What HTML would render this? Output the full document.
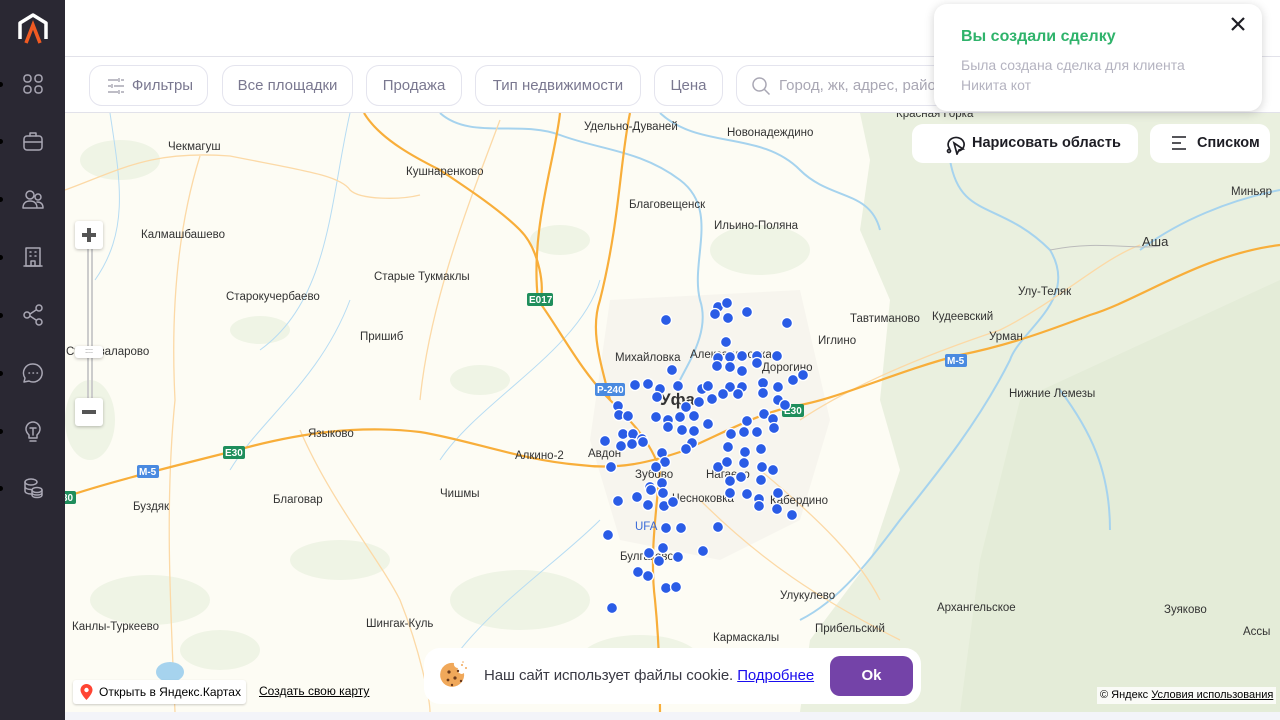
<!DOCTYPE html>
<html><head><meta charset="utf-8"><style>
*{margin:0;padding:0;box-sizing:border-box}
body{width:1280px;height:720px;overflow:hidden;background:#f3f4f9;font-family:"Liberation Sans",sans-serif;position:relative}
.side{position:absolute;left:0;top:0;width:65px;height:720px;background:#2a2833}
.side .dot{position:absolute;left:-2px;width:5px;height:5px;border-radius:50%;background:#000}
.side svg.ic{position:absolute;left:22px;width:22px;height:22px;fill:none;stroke:#a9a7b4;stroke-width:1.5;stroke-linecap:round;stroke-linejoin:round}
.head{position:absolute;left:65px;top:0;right:0;height:57px;background:#fff;border-bottom:1px solid #e2e2ea}
.bar{position:absolute;left:65px;top:57px;right:0;height:56px;background:#fff;border-bottom:1px solid #e2e2ea}
.chip{position:absolute;top:8px;height:41px;border:1px solid #e4e4ee;border-radius:13px;color:#7a7890;font-size:15px;line-height:39px;text-align:center}
.map{position:absolute;left:65px;top:113px;width:1215px;height:599px;overflow:hidden;background:#fdfcf4}
.toast{position:absolute;left:934px;top:4px;width:328px;height:107px;background:#fff;border-radius:13px;box-shadow:0 2px 10px rgba(0,0,0,.18)}
.btn{position:absolute;top:124px;height:39px;background:#fff;border-radius:11px;font-size:14.5px;font-weight:bold;color:#1d1d24;line-height:39px}
.zb{position:absolute;left:75px;width:28px;height:28px;background:#fff;border-radius:3px;box-shadow:0 1px 3px rgba(0,0,0,.25)}
</style></head><body>
<div class="side">
<svg style="position:absolute;left:17px;top:12px" width="32" height="32" viewBox="0 0 32 32"><path d="M3 27V11L16 3l13 8v16" fill="none" stroke="#fff" stroke-width="3.5" stroke-linejoin="round"/><path d="M9 31L16 13l7 18" fill="none" stroke="#f05a22" stroke-width="3.5"/></svg>
<div class="dot" style="top:82px"></div><div class="dot" style="top:139px"></div><div class="dot" style="top:197px"></div><div class="dot" style="top:255px"></div><div class="dot" style="top:313px"></div><div class="dot" style="top:371px"></div><div class="dot" style="top:429px"></div><div class="dot" style="top:486px"></div>
<svg class="ic" style="top:73px" viewBox="0 0 22 22"><rect x="2" y="2" width="7" height="7" rx="3"/><rect x="13" y="2" width="7" height="7" rx="3"/><rect x="2" y="13" width="7" height="7" rx="3"/><rect x="13" y="13" width="7" height="7" rx="3"/></svg>
<svg class="ic" style="top:130px" viewBox="0 0 22 22"><rect x="2" y="6" width="18" height="14" rx="3"/><path d="M8 6V3h6v3M2 12h18"/></svg>
<svg class="ic" style="top:188px" viewBox="0 0 22 22"><circle cx="8" cy="7" r="4"/><circle cx="16" cy="9" r="3"/><path d="M1 20c0-5 3-7 7-7s7 2 7 7zM15 14c4 0 6 2 6 6h-6"/></svg>
<svg class="ic" style="top:246px" viewBox="0 0 22 22"><rect x="4" y="2" width="14" height="18"/><path d="M2 20h18M8 6h1M13 6h1M8 10h1M13 10h1M9 20v-5h4v5"/></svg>
<svg class="ic" style="top:304px" viewBox="0 0 22 22"><circle cx="17" cy="4" r="3"/><circle cx="5" cy="11" r="3"/><circle cx="17" cy="18" r="3"/><path d="M8 10l6-4M8 12l6 4"/></svg>
<svg class="ic" style="top:362px" viewBox="0 0 22 22"><path d="M11 2a9 9 0 1 1-4 17l-5 1 1-4A9 9 0 0 1 11 2z"/><path d="M7 11h.5M11 11h.5M15 11h.5"/></svg>
<svg class="ic" style="top:420px" viewBox="0 0 22 22"><path d="M7 15c-2-2-3-4-3-6a7 7 0 0 1 14 0c0 2-1 4-3 6v3H7zM8 21h6M8 8h6M11 8v7"/></svg>
<svg class="ic" style="top:477px" viewBox="0 0 22 22"><ellipse cx="9" cy="5" rx="6" ry="3"/><path d="M3 5v9c0 2 3 3 6 3M3 9.5c0 2 3 3 6 3"/><ellipse cx="15" cy="13" rx="5" ry="2.5"/><path d="M10 13v5c0 1.5 2 2.5 5 2.5s5-1 5-2.5v-5M10 15.5c0 1.5 2 2.5 5 2.5s5-1 5-2.5"/></svg>
</div>
<div class="head">
<svg style="position:absolute;left:1064px;top:17px" width="22" height="22" viewBox="0 0 22 22" fill="none" stroke="#eee" stroke-width="1.5"><circle cx="11" cy="11" r="9"/><path d="M11 7v8M7 11h8"/></svg>
<svg style="position:absolute;left:1113px;top:16px" width="22" height="22" viewBox="0 0 22 22" fill="none" stroke="#eee" stroke-width="1.5"><path d="M5 16V10a6 6 0 0 1 12 0v6l2 2H3zM9 20h4"/></svg>
</div>
<div class="bar">
<div class="chip" style="left:24px;width:119px;padding-left:28px"><svg style="position:absolute;left:17px;top:11px" width="18" height="18" viewBox="0 0 18 18" fill="none" stroke="#a9a7b4" stroke-width="1.4"><path d="M1 3h10M14 3h3M12 1v4M1 9h3M7 9h10M5 7v4M1 15h10M14 15h3M12 13v4"/></svg>Фильтры</div>
<div class="chip" style="left:157px;width:131px">Все площадки</div>
<div class="chip" style="left:301px;width:96px">Продажа</div>
<div class="chip" style="left:410px;width:166px">Тип недвижимости</div>
<div class="chip" style="left:589px;width:69px">Цена</div>
<div class="chip" style="left:671px;width:520px;text-align:left;padding-left:42px;color:#a9a7b4">
<svg style="position:absolute;left:14px;top:10px" width="20" height="20" viewBox="0 0 20 20" fill="none" stroke="#a9a7b4" stroke-width="1.5"><circle cx="8.5" cy="8.5" r="6.5"/><path d="M13.5 13.5l5 5"/></svg>Город, жк, адрес, район</div>
</div>
<div class="map">
<svg width="1215" height="599" viewBox="65 113 1215 599" style="position:absolute;left:0;top:0" font-family="Liberation Sans, sans-serif" font-size="11.5" fill="#333">
<path d="M860 113 L1280 113 L1280 712 L800 712 L810 640 L870 560 L900 470 L880 400 L890 300 L860 230 L870 160Z" fill="#eaf0df"/>
<path d="M1020 400 L1280 280 L1280 712 L960 712 L980 560Z" fill="#e4ecd8"/>
<path d="M610 300 L800 290 L830 420 L800 520 L720 560 L620 540 L590 440Z" fill="#f7f5ee"/>
<g fill="#eff4e5">
<ellipse cx="120" cy="160" rx="40" ry="20"/><ellipse cx="260" cy="330" rx="30" ry="14"/><ellipse cx="340" cy="560" rx="50" ry="20"/><ellipse cx="150" cy="600" rx="60" ry="25"/><ellipse cx="520" cy="600" rx="70" ry="30"/><ellipse cx="760" cy="250" rx="50" ry="25"/><ellipse cx="640" cy="660" rx="60" ry="25"/><ellipse cx="480" cy="380" rx="30" ry="15"/><ellipse cx="90" cy="420" rx="25" ry="40"/><ellipse cx="220" cy="650" rx="40" ry="20"/><ellipse cx="560" cy="240" rx="30" ry="15"/>
</g>
<g fill="none" stroke="#a6d3ee" stroke-width="2">
<path d="M440 113 C470 140 520 120 560 135 C600 150 640 150 680 180 C720 210 690 260 700 300 C710 330 690 360 680 380"/>
<path d="M660 113 C700 150 760 130 800 170 C830 200 870 190 880 230"/>
<path d="M950 160 C960 220 1000 200 1050 250 C1080 300 1020 330 1010 360 C980 420 940 470 900 520 C870 560 840 600 800 620"/>
<path d="M1060 390 C1090 430 1110 470 1110 530"/>
<path d="M1140 250 C1180 220 1230 200 1280 190"/>
</g>
<g fill="none" stroke="#b6dcf3" stroke-width="1">
<path d="M110 113 C120 180 130 230 95 280"/><path d="M350 113 C330 200 330 300 260 350"/><path d="M350 300 C320 380 260 420 230 470"/><path d="M600 280 C580 350 480 400 440 460"/><path d="M600 520 C560 560 500 600 460 650"/>
</g>
<g fill="none" stroke="#fcd9a6" stroke-width="1.3">
<path d="M65 190 C120 170 150 150 230 156 C300 170 340 175 350 190 C360 200 400 200 420 195"/>
<path d="M200 156 C180 220 170 300 175 400 C165 500 170 600 175 712"/>
<path d="M500 120 C470 200 430 300 420 400"/><path d="M300 430 C330 500 380 560 400 600 C420 650 430 700 430 712"/>
<path d="M700 500 C760 560 820 600 900 640"/><path d="M760 470 C820 520 860 560 880 600"/>
<path d="M800 420 C860 380 940 350 1000 330 C1060 300 1100 260 1140 245"/>
</g>
<g fill="none" stroke="#f8ae3a" stroke-width="2.2">
<path d="M65 497 C100 485 150 472 230 452 C300 432 360 425 420 432 C470 440 520 460 580 465 C620 470 650 462 680 452 C730 430 760 412 800 405 C840 398 900 370 960 355 C1010 345 1050 330 1090 315 C1140 300 1200 255 1280 245"/>
<path d="M560 113 C555 160 530 230 538 300 C560 330 580 370 610 400 C630 420 650 440 660 470"/>
<path d="M364 113 C380 140 420 160 440 170 C470 190 500 210 520 230 C540 250 545 290 540 300"/>
<path d="M660 470 C655 520 650 560 655 600 C660 650 660 700 660 712"/>
<path d="M610 400 C600 360 590 330 600 300 C620 220 620 160 630 113"/>
</g>
<path d="M1050 250 C1100 240 1130 250 1160 246" stroke="#bbb" stroke-width="1" fill="none"/>
<ellipse cx="170" cy="672" rx="14" ry="10" fill="#a6d3ee"/>
<g font-size="10" font-weight="bold" fill="#fff">
<rect x="527" y="293" width="26" height="13" rx="2" fill="#1f8e5c"/><text x="529" y="303">E017</text>
<rect x="595" y="383" width="30" height="13" rx="2" fill="#4a8ae0"/><text x="597" y="393">P-240</text>
<rect x="782" y="404" width="22" height="13" rx="2" fill="#1f8e5c"/><text x="784" y="414">E30</text>
<rect x="945" y="354" width="22" height="13" rx="2" fill="#4a8ae0"/><text x="947" y="364">M-5</text>
<rect x="137" y="465" width="22" height="13" rx="2" fill="#4a8ae0"/><text x="139" y="475">M-5</text>
<rect x="223" y="446" width="22" height="13" rx="2" fill="#1f8e5c"/><text x="225" y="456">E30</text>
<rect x="58" y="491" width="18" height="13" rx="2" fill="#1f8e5c"/><text x="62" y="501">30</text>
</g>
<g>
<text x="584" y="130">Удельно-Дуваней</text><text x="727" y="136">Новонадеждино</text><text x="168" y="150">Чекмагуш</text><text x="406" y="175">Кушнаренково</text><text x="629" y="208">Благовещенск</text><text x="714" y="229">Ильино-Поляна</text><text x="141" y="238">Калмашбашево</text><text x="374" y="280">Старые Тукмаклы</text><text x="226" y="300">Старокучербаево</text><text x="360" y="340">Пришиб</text><text x="615" y="361">Михайловка</text><text x="690" y="358">Александровка</text><text x="762" y="371">Дорогино</text><text x="818" y="344">Иглино</text><text x="850" y="322">Тавтиманово</text><text x="932" y="320">Кудеевский</text><text x="1018" y="295">Улу-Теляк</text><text x="989" y="340">Урман</text><text x="1142" y="246" font-size="13">Аша</text><text x="1231" y="195">Миньяр</text><text x="896" y="117">Красная Горка</text><text x="1009" y="397">Нижние Лемезы</text><text x="660" y="405" font-size="17" font-weight="bold">Уфа</text><text x="308" y="437">Языково</text><text x="515" y="459">Алкино-2</text><text x="588" y="457">Авдон</text><text x="635" y="478">Зубово</text><text x="706" y="478">Нагаево</text><text x="672" y="502">Чесноковка</text><text x="770" y="504">Кабердино</text><text x="133" y="510">Буздяк</text><text x="273" y="503">Благовар</text><text x="440" y="497">Чишмы</text><text x="635" y="530" fill="#3a6ad8">UFA</text><text x="620" y="560">Булгаково</text><text x="780" y="599">Улукулево</text><text x="937" y="611">Архангельское</text><text x="1164" y="613">Зуяково</text><text x="815" y="632">Прибельский</text><text x="713" y="641">Кармаскалы</text><text x="366" y="627">Шингак-Куль</text><text x="72" y="630">Канлы-Туркеево</text><text x="1243" y="635">Ассы</text><text x="66" y="355">Староваларово</text>
</g>
<g fill="#2a5ce6" stroke="#fff" stroke-width="1.3">
<circle cx="666" cy="320" r="5.5"/><circle cx="718" cy="307" r="5.5"/><circle cx="727" cy="303" r="5.5"/><circle cx="715" cy="314" r="5.5"/><circle cx="728" cy="318" r="5.5"/><circle cx="747" cy="312" r="5.5"/><circle cx="787" cy="323" r="5.5"/><circle cx="726" cy="342" r="5.5"/><circle cx="718" cy="358" r="5.5"/><circle cx="730" cy="357" r="5.5"/><circle cx="742" cy="356" r="5.5"/><circle cx="757" cy="356" r="5.5"/><circle cx="777" cy="356" r="5.5"/><circle cx="717" cy="366" r="5.5"/><circle cx="730" cy="367" r="5.5"/><circle cx="742" cy="371" r="5.5"/><circle cx="757" cy="363" r="5.5"/><circle cx="672" cy="370" r="5.5"/><circle cx="793" cy="380" r="5.5"/><circle cx="803" cy="375" r="5.5"/><circle cx="635" cy="385" r="5.5"/><circle cx="648" cy="384" r="5.5"/><circle cx="660" cy="389" r="5.5"/><circle cx="678" cy="386" r="5.5"/><circle cx="702" cy="389" r="5.5"/><circle cx="708" cy="386" r="5.5"/><circle cx="730" cy="387" r="5.5"/><circle cx="742" cy="387" r="5.5"/><circle cx="763" cy="383" r="5.5"/><circle cx="778" cy="387" r="5.5"/><circle cx="657" cy="397" r="5.5"/><circle cx="723" cy="394" r="5.5"/><circle cx="738" cy="394" r="5.5"/><circle cx="763" cy="393" r="5.5"/><circle cx="712" cy="399" r="5.5"/><circle cx="699" cy="402" r="5.5"/><circle cx="778" cy="400" r="5.5"/><circle cx="785" cy="405" r="5.5"/><circle cx="618" cy="406" r="5.5"/><circle cx="686" cy="407" r="5.5"/><circle cx="619" cy="415" r="5.5"/><circle cx="628" cy="416" r="5.5"/><circle cx="656" cy="417" r="5.5"/><circle cx="668" cy="420" r="5.5"/><circle cx="680" cy="417" r="5.5"/><circle cx="694" cy="416" r="5.5"/><circle cx="764" cy="414" r="5.5"/><circle cx="773" cy="419" r="5.5"/><circle cx="747" cy="421" r="5.5"/><circle cx="774" cy="428" r="5.5"/><circle cx="668" cy="427" r="5.5"/><circle cx="708" cy="424" r="5.5"/><circle cx="682" cy="430" r="5.5"/><circle cx="694" cy="431" r="5.5"/><circle cx="744" cy="432" r="5.5"/><circle cx="757" cy="432" r="5.5"/><circle cx="731" cy="434" r="5.5"/><circle cx="623" cy="434" r="5.5"/><circle cx="633" cy="434" r="5.5"/><circle cx="605" cy="441" r="5.5"/><circle cx="642" cy="439" r="5.5"/><circle cx="621" cy="446" r="5.5"/><circle cx="632" cy="444" r="5.5"/><circle cx="643" cy="442" r="5.5"/><circle cx="692" cy="443" r="5.5"/><circle cx="686" cy="449" r="5.5"/><circle cx="728" cy="447" r="5.5"/><circle cx="745" cy="452" r="5.5"/><circle cx="761" cy="449" r="5.5"/><circle cx="662" cy="453" r="5.5"/><circle cx="665" cy="462" r="5.5"/><circle cx="611" cy="467" r="5.5"/><circle cx="656" cy="467" r="5.5"/><circle cx="718" cy="467" r="5.5"/><circle cx="727" cy="462" r="5.5"/><circle cx="744" cy="463" r="5.5"/><circle cx="762" cy="467" r="5.5"/><circle cx="773" cy="470" r="5.5"/><circle cx="730" cy="481" r="5.5"/><circle cx="741" cy="477" r="5.5"/><circle cx="761" cy="480" r="5.5"/><circle cx="662" cy="483" r="5.5"/><circle cx="650" cy="487" r="5.5"/><circle cx="651" cy="490" r="5.5"/><circle cx="730" cy="493" r="5.5"/><circle cx="747" cy="494" r="5.5"/><circle cx="778" cy="493" r="5.5"/><circle cx="637" cy="497" r="5.5"/><circle cx="663" cy="493" r="5.5"/><circle cx="618" cy="501" r="5.5"/><circle cx="648" cy="505" r="5.5"/><circle cx="664" cy="506" r="5.5"/><circle cx="673" cy="502" r="5.5"/><circle cx="759" cy="499" r="5.5"/><circle cx="759" cy="506" r="5.5"/><circle cx="777" cy="509" r="5.5"/><circle cx="792" cy="515" r="5.5"/><circle cx="666" cy="528" r="5.5"/><circle cx="681" cy="528" r="5.5"/><circle cx="718" cy="527" r="5.5"/><circle cx="608" cy="535" r="5.5"/><circle cx="703" cy="551" r="5.5"/><circle cx="663" cy="548" r="5.5"/><circle cx="649" cy="553" r="5.5"/><circle cx="659" cy="561" r="5.5"/><circle cx="678" cy="557" r="5.5"/><circle cx="638" cy="572" r="5.5"/><circle cx="648" cy="576" r="5.5"/><circle cx="666" cy="588" r="5.5"/><circle cx="676" cy="587" r="5.5"/><circle cx="612" cy="608" r="5.5"/>
</g>
</svg>
</div>
<div style="position:absolute;left:87px;top:249px;width:6px;height:150px;border-left:2px solid #ccc;border-right:2px solid #ccc"></div>
<div class="zb" style="top:221px"><div style="position:absolute;left:7px;top:12px;width:14px;height:4px;background:#555"></div><div style="position:absolute;left:12px;top:7px;width:4px;height:14px;background:#555"></div></div>
<div class="zb" style="top:346px;height:12px;font-size:7px;color:#666;text-align:center;line-height:12px">::::</div>
<div class="zb" style="top:398px"><div style="position:absolute;left:7px;top:12px;width:14px;height:4px;background:#555"></div></div>
<div class="btn" style="left:912px;width:226px;padding-left:60px"><svg style="position:absolute;left:32px;top:9px" width="22" height="22" viewBox="0 0 22 22" fill="none" stroke="#1d1d24" stroke-width="1.7"><path d="M6 16a8 7 0 1 1 9 2"/><path d="M10 10l9 6-4 1-2 4z"/><circle cx="5" cy="18" r="1.5"/></svg>Нарисовать область</div>
<div class="btn" style="left:1150px;width:120px;padding-left:47px"><svg style="position:absolute;left:21px;top:11px" width="16" height="16" viewBox="0 0 16 16" stroke="#1d1d24" stroke-width="1.6"><path d="M1 2h14M1 8h9M1 14h14"/></svg>Списком</div>
<div style="position:absolute;left:73px;top:680px;width:173px;height:24px;background:#fff;border-radius:3px;box-shadow:0 1px 2px rgba(0,0,0,.2);font-size:12px;line-height:24px;padding-left:26px;color:#000"><svg style="position:absolute;left:7px;top:4px" width="13" height="16" viewBox="0 0 13 16"><path d="M6.5 0A6 6 0 0 0 .5 6c0 4 6 10 6 10s6-6 6-10a6 6 0 0 0-6-6z" fill="#f43"/><circle cx="6.5" cy="6" r="2.2" fill="#fff"/></svg>Открыть в Яндекс.Картах</div>
<div style="position:absolute;left:259px;top:684px;font-size:12px;text-decoration:underline;color:#000">Создать свою карту</div>
<div style="position:absolute;left:1097px;top:687px;width:179px;height:17px;background:rgba(255,255,255,.8);font-size:11px;line-height:17px;padding-left:3px;color:#000">© Яндекс <u>Условия использования</u></div>
<div style="position:absolute;left:424px;top:648px;width:497px;height:56px;background:#fff;border-radius:16px">
<svg style="position:absolute;left:14px;top:11px" width="32" height="32" viewBox="0 0 32 32"><path d="M26 14a12 12 0 1 1-10-10 4 4 0 0 0 4 5 4 4 0 0 0 6 5z" fill="#f0a85a"/><g fill="#6b3a1c"><circle cx="11" cy="13" r="1.6"/><circle cx="17" cy="19" r="1.6"/><circle cx="10" cy="21" r="1.4"/><circle cx="20" cy="12" r="1.2"/><circle cx="14" cy="26" r="1.2"/><circle cx="23" cy="22" r="1.2"/></g><g fill="#f0a85a"><circle cx="24" cy="6" r="1"/><circle cx="28" cy="9" r="1"/><circle cx="25" cy="3" r=".8"/></g></svg>
<div style="position:absolute;left:60px;top:19px;font-size:15px;color:#3a3a44;letter-spacing:-0.1px">Наш сайт использует файлы cookie. <span style="color:#1a0dee;text-decoration:underline">Подробнее</span></div>
<div style="position:absolute;left:406px;top:8px;width:83px;height:40px;background:#7443a8;border-radius:10px;color:#fff;font-size:15px;font-weight:bold;text-align:center;line-height:40px">Ok</div>
</div>
<div class="toast">
<div style="position:absolute;left:27px;top:24px;font-size:16px;font-weight:bold;color:#2fb36b">Вы создали сделку</div>
<div style="position:absolute;left:27px;top:51px;font-size:14px;color:#b4b3c0;line-height:20px">Была создана сделка для клиента<br>Никита кот</div>
<svg style="position:absolute;left:297px;top:13px" width="14" height="14" viewBox="0 0 14 14" stroke="#1d1d24" stroke-width="2.2"><path d="M1 1l12 12M13 1L1 13"/></svg>
</div>
</body></html>
